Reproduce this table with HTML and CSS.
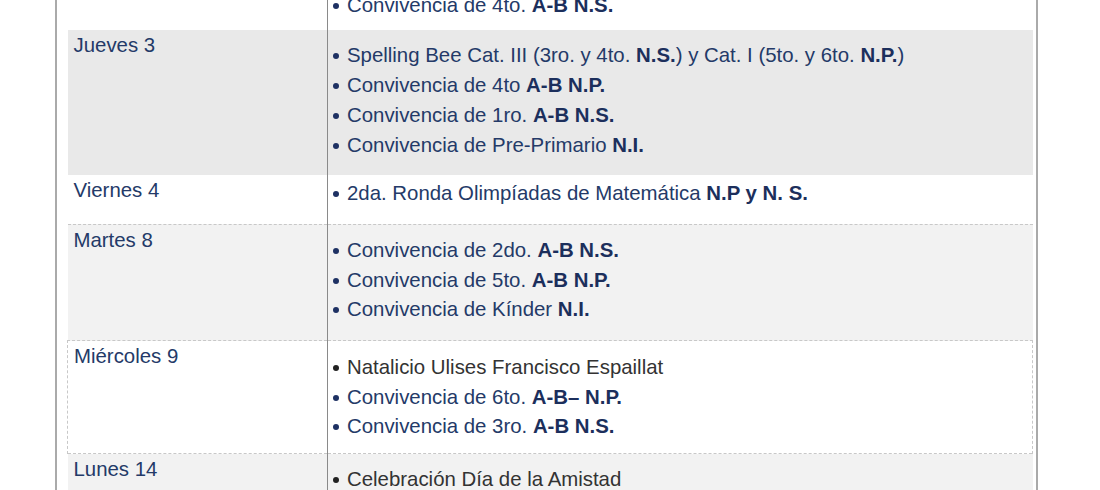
FILE: index.html
```html
<!DOCTYPE html>
<html lang="es">

<head>
    <meta charset="UTF-8">
    <meta name="viewport" content="width=device-width, initial-scale=1">
    <title>Calendario de Actividades</title>
    <link rel="stylesheet" href="styles.css">
</head>

<body>
    <div class="page">
        <table class="agenda">
            <tr class="first">
                <td class="day">Miércoles 2</td>
                <td class="events">
                    <ul class="spaced">
                        <li>Convivencia de 3ro. <b>A-B N.P.</b></li>
                        <li>Convivencia de 4to. <b>A-B N.S.</b></li>
                    </ul>
                </td>
            </tr>
            <tr class="shade">
                <td class="day">Jueves 3</td>
                <td class="events">
                    <ul class="spaced">
                        <li>Spelling Bee Cat. III (3ro. y 4to. <b>N.S.</b>) y Cat. I (5to. y 6to. <b>N.P.</b>)</li>
                        <li>Convivencia de 4to <b>A-B N.P.</b></li>
                        <li>Convivencia de 1ro. <b>A-B N.S.</b></li>
                        <li>Convivencia de Pre-Primario <b>N.I.</b></li>
                    </ul>
                </td>
            </tr>
            <tr>
                <td class="day">Viernes 4</td>
                <td class="events">
                    <ul>
                        <li>2da. Ronda Olimpíadas de Matemática <b>N.P y N. S.</b></li>
                    </ul>
                </td>
            </tr>
            <tr class="light dashed">
                <td class="day">Martes 8</td>
                <td class="events">
                    <ul class="spaced">
                        <li>Convivencia de 2do. <b>A-B N.S.</b></li>
                        <li>Convivencia de 5to. <b>A-B N.P.</b></li>
                        <li>Convivencia de Kínder <b>N.I.</b></li>
                    </ul>
                </td>
            </tr>
            <tr class="dashed boxed">
                <td class="day">Miércoles 9</td>
                <td class="events">
                    <ul class="spaced short">
                        <li class="plain">Natalicio Ulises Francisco Espaillat</li>
                        <li>Convivencia de 6to. <b>A-B– N.P.</b></li>
                        <li>Convivencia de 3ro. <b>A-B N.S.</b></li>
                    </ul>
                </td>
            </tr>
            <tr class="light dashed">
                <td class="day">Lunes 14</td>
                <td class="events">
                    <ul class="spaced">
                        <li class="plain">Celebración Día de la Amistad</li>
                        <li>Convivencia de 1ro. <b>A-B N.P.</b></li>
                    </ul>
                </td>
            </tr>
        </table>
    </div>
</body>

</html>
```

FILE: styles.css
```css
body {
    font-family: "Liberation Sans", Arial, sans-serif;
    margin: 0;
    background-color: #fff;
    overflow: hidden;
}

.page {
    width: 983px;
    margin-left: 55px;
    padding: 0 3px 0 10px;
    box-sizing: border-box;
    border-left: 2px solid #aaa;
    border-right: 2px solid #aaa;
    min-height: 490px;
}

.agenda {
    width: 966px;
    margin-top: -50px;
    border-collapse: collapse;
    font-size: 20.4px;
    line-height: 29.7px;
    color: #243a68;
}

.agenda td {
    vertical-align: top;
    padding: 0;
}

.agenda .day {
    width: 253px;
    padding: 1px 0 0 6px;
    border-right: 1px solid #8a8a8a;
}

.agenda .events {
    padding: 4px 6px 15px 5px;
}

.agenda tr.first .events {
    padding-bottom: 10px;
}

.shade td {
    background-color: #e9e9e9;
}

.light td {
    background-color: #f2f2f2;
}

.dashed td {
    border-top: 1px dashed #c8c8c8;
}

.boxed .day {
    border-left: 1px dashed #c8c8c8;
}

.boxed .events {
    border-right: 1px dashed #c8c8c8;
}

.agenda ul {
    list-style: none;
    margin: 0;
    padding: 0;
}

.agenda ul.spaced {
    margin-top: 7px;
}

.agenda ul.short {
    margin-top: 8px;
    margin-bottom: -4px;
}

.agenda li::before {
    content: "";
    display: inline-block;
    width: 6px;
    height: 6px;
    border-radius: 50%;
    background-color: #1e3163;
    margin: 0 8px 0 0;
    vertical-align: 3px;
}

.agenda li.plain {
    color: #333;
}

.agenda li.plain::before {
    background-color: #222;
}

.agenda b {
    color: #1c2f5c;
}
```
